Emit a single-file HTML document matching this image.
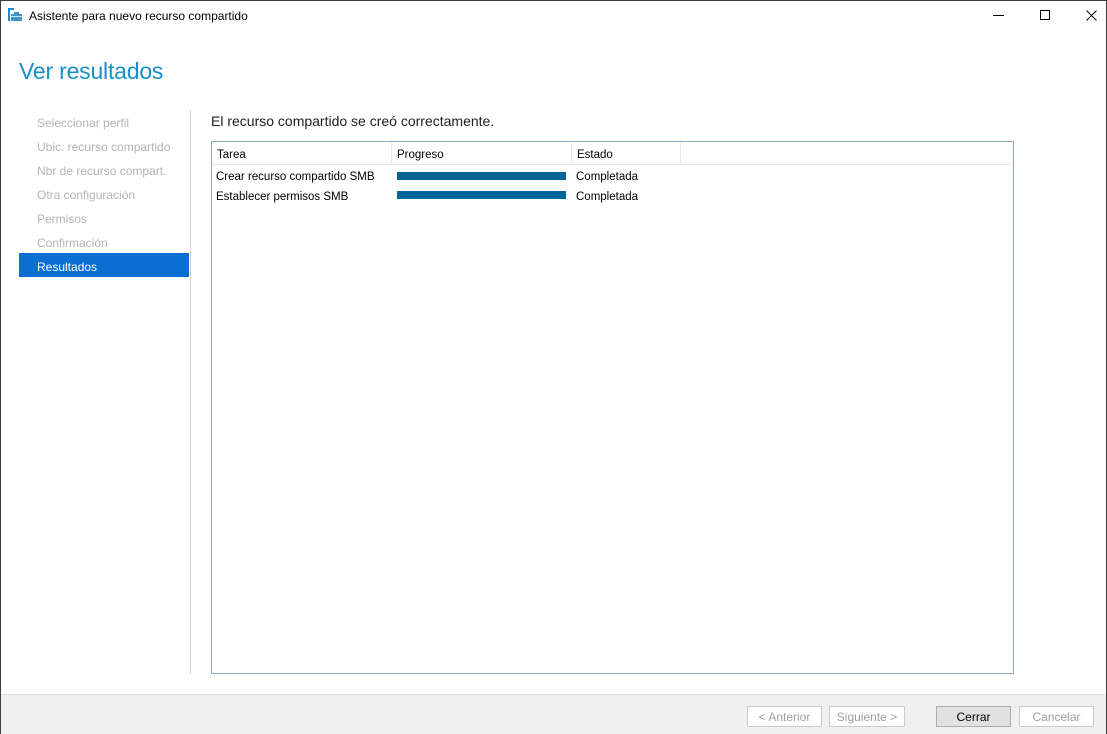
<!DOCTYPE html>
<html><head><meta charset="utf-8"><style>
body{margin:0;width:1107px;height:734px;overflow:hidden;background:#fff;font-family:"Liberation Sans",sans-serif;position:relative}
.abs{position:absolute;white-space:nowrap}
.frame{position:absolute;left:0;top:0;width:1105px;height:732px;border:1px solid #3c3c3c}
.nav{position:absolute;left:37px;font-size:12px;color:#b4b4b4}
.btn{position:absolute;top:706px;height:21px;border:1px solid #cccccc;background:#fff;font-size:12px;color:#a0a0a0;text-align:center;line-height:20px;box-sizing:border-box}
.t{font-size:11.5px;color:#000}
.bar{position:absolute;left:397px;width:169px;height:8px;background:#006699}
</style></head><body>
<div class="frame"></div>
<svg class="abs" style="left:7px;top:7px" width="16" height="16"><rect x="1" y="1" width="6" height="2" fill="#1e88d0"/><rect x="1" y="1" width="2" height="13" fill="#1e88d0"/><rect x="4" y="7" width="11" height="7" fill="#4a90c8"/><rect x="7" y="5" width="5" height="2" fill="#4a90c8"/><rect x="4" y="9" width="11" height="1" fill="#cfe4f4"/></svg>
<div class="abs" style="left:29px;top:9px;font-size:12px">Asistente para nuevo recurso compartido</div>
<div class="abs" style="left:993px;top:15px;width:11px;height:1px;background:#000"></div>
<div class="abs" style="left:1040px;top:10px;width:8px;height:8px;border:1px solid #000"></div>
<svg class="abs" style="left:1086px;top:10px" width="11" height="11"><path d="M0.5 0.5L10.5 10.5M10.5 0.5L0.5 10.5" stroke="#000" stroke-width="1"/></svg>
<div class="abs" style="left:19px;top:58px;font-size:23px;color:#1a8fc6;letter-spacing:-0.2px">Ver resultados</div>
<div class="nav abs" style="top:116px">Seleccionar perfil</div>
<div class="nav abs" style="top:140px">Ubic. recurso compartido</div>
<div class="nav abs" style="top:164px">Nbr de recurso compart.</div>
<div class="nav abs" style="top:188px">Otra configuración</div>
<div class="nav abs" style="top:212px">Permisos</div>
<div class="nav abs" style="top:236px">Confirmación</div>
<div class="abs" style="left:19px;top:253px;width:170px;height:24px;background:#0a6fd0"></div>
<div class="nav abs" style="top:260px;color:#fff">Resultados</div>
<div class="abs" style="left:190px;top:110px;width:1px;height:564px;background:#d0d0d0"></div>
<div class="abs" style="left:211px;top:113px;font-size:14px;color:#1e1e1e">El recurso compartido se creó correctamente.</div>
<div class="abs" style="left:211px;top:141px;width:801px;height:531px;border:1px solid #8aa6c4"></div>
<div class="abs" style="left:212px;top:164px;width:801px;height:1px;background:#e5e5e5"></div>
<div class="abs" style="left:391px;top:143px;width:1px;height:21px;background:#e5e5e5"></div>
<div class="abs" style="left:571px;top:143px;width:1px;height:21px;background:#e5e5e5"></div>
<div class="abs" style="left:680px;top:143px;width:1px;height:21px;background:#e5e5e5"></div>
<div class="abs t" style="left:217px;top:149px">Tarea</div>
<div class="abs t" style="left:397px;top:149px">Progreso</div>
<div class="abs t" style="left:577px;top:149px">Estado</div>
<div class="abs t" style="left:216px;top:171px">Crear recurso compartido SMB</div>
<div class="abs t" style="left:216px;top:191px">Establecer permisos SMB</div>
<div class="bar" style="top:172px"></div>
<div class="bar" style="top:191px"></div>
<div class="abs t" style="left:576px;top:171px">Completada</div>
<div class="abs t" style="left:576px;top:191px">Completada</div>
<div class="abs" style="left:1px;top:694px;width:1105px;height:39px;background:#f0f0f0;border-top:1px solid #dcdcdc"></div>
<div class="btn" style="left:747px;width:75px">&lt; Anterior</div>
<div class="btn" style="left:829px;width:76px">Siguiente &gt;</div>
<div class="btn" style="left:936px;width:75px;border-color:#adadad;background:#e1e1e1;color:#000">Cerrar</div>
<div class="btn" style="left:1019px;width:75px">Cancelar</div>
</body></html>
